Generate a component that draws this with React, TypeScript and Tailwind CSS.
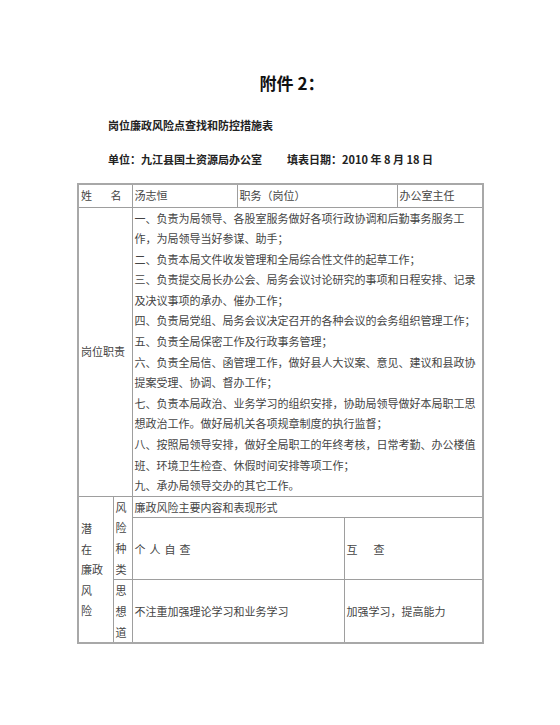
import React from 'react';

// 岗位职责 – one entry per printed line, wrapped as in the original form
const dutyLines = [
  '一、负责为局领导、各股室服务做好各项行政协调和后勤事务服务工',
  '作，为局领导当好参谋、助手；',
  '二、负责本局文件收发管理和全局综合性文件的起草工作；',
  '三、负责提交局长办公会、局务会议讨论研究的事项和日程安排、记录',
  '及决议事项的承办、催办工作；',
  '四、负责局党组、局务会议决定召开的各种会议的会务组织管理工作；',
  '五、负责全局保密工作及行政事务管理；',
  '六、负责全局信、函管理工作，做好县人大议案、意见、建议和县政协',
  '提案受理、协调、督办工作；',
  '七、负责本局政治、业务学习的组织安排，协助局领导做好本局职工思',
  '想政治工作。做好局机关各项规章制度的执行监督；',
  '八、按照局领导安排，做好全局职工的年终考核，日常考勤、办公楼值',
  '班、环境卫生检查、休假时间安排等项工作；',
  '九、承办局领导交办的其它工作。',
];

const sans = "font-['Noto_Sans_CJK_SC',sans-serif]";
const cell = 'border border-[#9e9e9e] p-0 pl-[2px] align-middle';

function Stack({ lines }: { lines: string[] }) {
  return (
    <>
      {lines.map((l, i) => (
        <div key={i} className="whitespace-nowrap">
          {l}
        </div>
      ))}
    </>
  );
}

export default function App() {
  return (
    <div className="w-[560px] min-h-[725px] bg-white text-[#111]">
      {/* heading block */}
      <div className={`pt-[70px] pl-[24px] text-center ${sans} text-[17px] leading-[26px] font-bold`}>
        附件 2：
      </div>
      <div className={`mt-[20px] ml-[108px] ${sans} text-[11px] leading-[18px] font-bold text-[#222]`}>
        岗位廉政风险点查找和防控措施表
      </div>
      <div className={`mt-[16px] ml-[108px] flex ${sans} text-[11px] leading-[18px] font-bold text-[#222] whitespace-pre`}>
        <span>单位：九江县国土资源局办公室</span>
        <span className="ml-[25px]">填表日期：2010 年 8 月 18 日</span>
      </div>

      {/* form table */}
      <table
        className={`mt-[15px] ml-[77px] w-[405px] table-fixed border-collapse border-2 border-[#a8a8a8] ${sans} text-[11px] leading-[20.6px] text-[#444]`}
      >
        <colgroup>
          <col className="w-[35px]" />
          <col className="w-[19px]" />
          <col className="w-[105px]" />
          <col className="w-[107px]" />
          <col className="w-[53px]" />
          <col className="w-[86px]" />
        </colgroup>
        <tbody>
          <tr className="h-[23px]">
            <td colSpan={2} className={cell}>
              <div className="flex justify-between pr-[10px]">
                <span>姓</span>
                <span>名</span>
              </div>
            </td>
            <td className={cell}>汤志恒</td>
            <td colSpan={2} className={cell}>职务（岗位）</td>
            <td className={cell}>办公室主任</td>
          </tr>
          <tr>
            <td colSpan={2} className={cell}>
              岗位职责
            </td>
            <td colSpan={4} className={cell}>
              <Stack lines={dutyLines} />
            </td>
          </tr>
          <tr>
            <td rowSpan={3} className={cell}>
              <Stack lines={['潜', '在', '廉政', '风', '险']} />
            </td>
            <td rowSpan={2} className={`${cell} align-top`}>
              <Stack lines={['风', '险', '种', '类']} />
            </td>
            <td colSpan={4} className={cell}>
              廉政风险主要内容和表现形式
            </td>
          </tr>
          <tr className="h-[62px]">
            <td colSpan={2} className={`${cell} tracking-[4px]`}>
              个人自查
            </td>
            <td colSpan={2} className={cell}>
              互<span className="ml-[16px]">查</span>
            </td>
          </tr>
          <tr>
            <td className={cell}>
              <Stack lines={['思', '想', '道']} />
            </td>
            <td colSpan={2} className={cell}>
              不注重加强理论学习和业务学习
            </td>
            <td colSpan={2} className={cell}>
              加强学习，提高能力
            </td>
          </tr>
        </tbody>
      </table>
    </div>
  );
}
